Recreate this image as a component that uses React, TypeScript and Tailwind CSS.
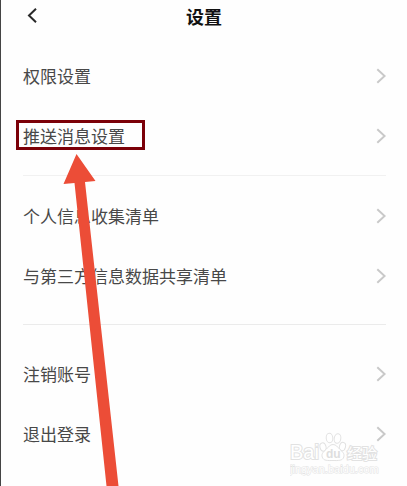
type RowProps = { label: string; highlighted?: boolean };

function Row({ label, highlighted = false }: RowProps) {
  return (
    <li>
      <button type="button" className="relative flex h-[60px] w-full items-center justify-between text-left">
        <span>{label}</span>
        <svg className="h-4 w-3 shrink-0" viewBox="0 0 12 16" fill="none" stroke="#c9c9c9" strokeWidth="2" aria-hidden="true">
          <path d="M3.300 1.200 10.600 8 3.300 14.800" />
        </svg>
        {highlighted && (
          <span className="absolute -left-[7px] top-[14px] h-[30px] w-[129px] border-3 border-[#7b0008]" />
        )}
      </button>
    </li>
  );
}

function Watermark() {
  return (
    <svg
      className="pointer-events-none absolute right-[21px] top-[428px] h-[52px] w-24"
      viewBox="0 0 96 52"
      fill="#ffffff"
      stroke="#e2e2e2"
      strokeWidth="1"
      aria-hidden="true"
    >
      <g className="font-['Liberation_Sans','Noto_Sans_CJK_SC',sans-serif]">
        <text x="0" y="31" fontSize="20" strokeWidth="2" paintOrder="stroke">Bai</text>
        <ellipse cx="33" cy="19" rx="3" ry="4.200" transform="rotate(-15 33 19)" />
        <ellipse cx="39.500" cy="10" rx="3.300" ry="4.800" transform="rotate(-4 39.500 10)" />
        <ellipse cx="47.500" cy="10.500" rx="3.300" ry="4.800" transform="rotate(10 47.500 10.500)" />
        <ellipse cx="52.500" cy="18.500" rx="3" ry="4.200" transform="rotate(15 52.500 18.500)" />
        <path d="M43 16.500c-3 0-4.500 2.500-6.500 4.500-2.800 2.700-5.300 4.500-4.300 8 1.300 4 5.500 3.500 10.800 3.500s9.500.5 10.800-3.500c1-3.500-1.500-5.300-4.300-8-2-2-3.500-4.500-6.500-4.500Z" />
        <text x="36" y="30" fontSize="12" fontWeight="700" fill="#dedede" stroke="none">du</text>
        <text x="57" y="31" fontSize="15" strokeWidth="2" paintOrder="stroke">经验</text>
        <text x="0" y="45" fontSize="11" strokeWidth="1" paintOrder="stroke">jingyan.baidu.com</text>
      </g>
    </svg>
  );
}

export default function App() {
  return (
    <main className="relative min-h-screen overflow-hidden border-l border-[#444444] bg-[#fefefe] pl-[22px] pr-[21px] font-['Noto_Sans_CJK_SC',sans-serif] text-[17px] leading-6 text-[#484848]">
      <header className="-ml-[22px] -mr-[21px] grid h-8 grid-cols-[1fr_auto_1fr] items-center">
        <button type="button" aria-label="返回" className="flex h-8 w-12 items-center pl-6">
          <svg className="h-4 w-3" viewBox="0 0 12 16" fill="none" stroke="#292929" strokeWidth="2" aria-hidden="true">
            <path d="M11 .8 4 7.500l7 6.700" />
          </svg>
        </button>
        <h1 className="text-lg font-bold leading-6 text-[#111111]">设置</h1>
      </header>

      <ul className="pt-[14px]">
        <Row label="权限设置" />
        <Row label="推送消息设置" highlighted />
      </ul>
      <hr className="mb-[10px] mt-[9px] border-[#f1f1f1]" />
      <ul>
        <Row label="个人信息收集清单" />
        <Row label="与第三方信息数据共享清单" />
      </ul>
      <hr className="mb-[19px] mt-[18px] border-[#ebebeb]" />
      <ul>
        <Row label="注销账号" />
        <Row label="退出登录" />
      </ul>

      <svg
        className="pointer-events-none absolute left-[62px] top-[154px] h-[332px] w-14"
        viewBox="0 0 56 332"
        fill="#ec4d37"
        aria-hidden="true"
      >
        <path d="M13.500 0 32.500 27 22 28 55.500 332H43.500L11.500 29 .5 30Z" />
      </svg>
      <Watermark />
    </main>
  );
}
